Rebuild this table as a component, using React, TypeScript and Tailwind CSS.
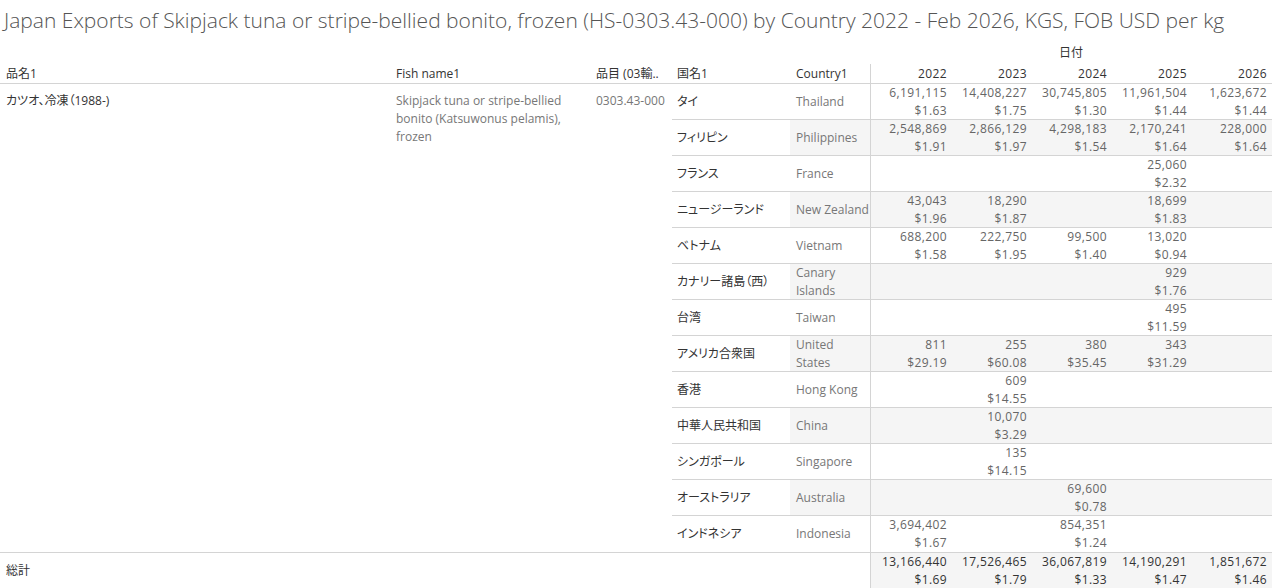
import React from 'react';

type Cell = [string, string] | null;

interface CountryRow {
    jp: string;
    en: string[];
    v: Cell[];
}

const years = ['2022', '2023', '2024', '2025', '2026'];

const rows: CountryRow[] = [
    { jp: 'タイ', en: ['Thailand'], v: [['6,191,115', '$1.63'], ['14,408,227', '$1.75'], ['30,745,805', '$1.30'], ['11,961,504', '$1.44'], ['1,623,672', '$1.44']] },
    { jp: 'フィリピン', en: ['Philippines'], v: [['2,548,869', '$1.91'], ['2,866,129', '$1.97'], ['4,298,183', '$1.54'], ['2,170,241', '$1.64'], ['228,000', '$1.64']] },
    { jp: 'フランス', en: ['France'], v: [null, null, null, ['25,060', '$2.32'], null] },
    { jp: 'ニュージーランド', en: ['New Zealand'], v: [['43,043', '$1.96'], ['18,290', '$1.87'], null, ['18,699', '$1.83'], null] },
    { jp: 'ベトナム', en: ['Vietnam'], v: [['688,200', '$1.58'], ['222,750', '$1.95'], ['99,500', '$1.40'], ['13,020', '$0.94'], null] },
    { jp: 'カナリー諸島（西）', en: ['Canary', 'Islands'], v: [null, null, null, ['929', '$1.76'], null] },
    { jp: '台湾', en: ['Taiwan'], v: [null, null, null, ['495', '$11.59'], null] },
    { jp: 'アメリカ合衆国', en: ['United', 'States'], v: [['811', '$29.19'], ['255', '$60.08'], ['380', '$35.45'], ['343', '$31.29'], null] },
    { jp: '香港', en: ['Hong Kong'], v: [null, ['609', '$14.55'], null, null, null] },
    { jp: '中華人民共和国', en: ['China'], v: [null, ['10,070', '$3.29'], null, null, null] },
    { jp: 'シンガポール', en: ['Singapore'], v: [null, ['135', '$14.15'], null, null, null] },
    { jp: 'オーストラリア', en: ['Australia'], v: [null, null, ['69,600', '$0.78'], null, null] },
    { jp: 'インドネシア', en: ['Indonesia'], v: [['3,694,402', '$1.67'], null, ['854,351', '$1.24'], null, null] },
];

const totals: [string, string][] = [
    ['13,166,440', '$1.69'],
    ['17,526,465', '$1.79'],
    ['36,067,819', '$1.33'],
    ['14,190,291', '$1.47'],
    ['1,851,672', '$1.46'],
];

// proportional kana so Japanese labels stay as compact as the original
const jpText = "[font-feature-settings:'palt']";

const ValueCell: React.FC<{ cell: Cell; dark?: boolean }> = ({ cell, dark }) => (
    <div className={`w-[80px] shrink-0 pr-[4px] text-right leading-[18px] tracking-[0.4px] ${dark ? 'text-[#333333]' : 'text-[#666666]'}`}>
        {cell && (
            <>
                <div>{cell[0]}</div>
                <div>{cell[1]}</div>
            </>
        )}
    </div>
);

export default function App() {
    return (
        <div className="w-[1272px] h-[588px] bg-white overflow-hidden text-[12px] font-['Open_Sans','Noto_Sans_CJK_JP',sans-serif]">
            {/* Title */}
            <div className="h-[42px] pl-[4px] pt-[6px] text-[21px] font-light leading-[28px] text-[#555555] whitespace-nowrap">
                Japan Exports of Skipjack tuna or stripe-bellied bonito, frozen (HS-0303.43-000) by Country 2022 - Feb 2026, KGS, FOB USD per kg
            </div>

            {/* Column group header */}
            <div className="flex h-[22px]">
                <div className="w-[870px] shrink-0" />
                <div className={`flex-1 text-center leading-[22px] text-[#333333] ${jpText}`}>日付</div>
            </div>

            {/* Column headers */}
            <div className={`flex h-[20px] border-b border-[#d4d4d4] leading-[19px] text-[#333333] ${jpText}`}>
                <div className="w-[390px] shrink-0 pl-[6px]">品名1</div>
                <div className="w-[200px] shrink-0 pl-[6px]">Fish name1</div>
                <div className="w-[82px] shrink-0 pl-[6px] whitespace-nowrap overflow-hidden">品目 (03輸..</div>
                <div className="w-[118px] shrink-0 pl-[5px]">国名1</div>
                <div className="w-[80px] shrink-0 pl-[6px]">Country1</div>
                <div className="flex border-l border-[#d4d4d4]">
                    {years.map((y) => (
                        <div key={y} className="w-[80px] shrink-0 pr-[4px] text-right tracking-[0.4px]">{y}</div>
                    ))}
                </div>
            </div>

            {/* Body */}
            <div className="flex border-b border-[#d4d4d4]">
                <div className={`w-[390px] shrink-0 pl-[6px] pt-[8px] leading-[18px] text-[#333333] ${jpText}`}>カツオ、冷凍（1988-)</div>
                <div className="w-[200px] shrink-0 pl-[6px] pt-[8px] leading-[18px] text-[#777777] whitespace-nowrap">
                    <div>Skipjack tuna or stripe-bellied</div>
                    <div>bonito (Katsuwonus pelamis),</div>
                    <div>frozen</div>
                </div>
                <div className="w-[82px] shrink-0 pl-[6px] pt-[8px] leading-[18px] text-[#777777]">0303.43-000</div>
                <div className="flex-1">
                    {rows.map((r, i) => (
                        <div
                            key={r.en.join(' ')}
                            className={`flex h-[36px] ${i < rows.length - 1 ? 'border-b border-[#d4d4d4]' : ''}`}
                        >
                            <div className={`w-[118px] shrink-0 pl-[5px] flex items-center text-[#333333] ${jpText}`}>{r.jp}</div>
                            <div className={`flex flex-1 ${i % 2 === 1 ? 'bg-[#f5f5f5]' : ''}`}>
                                <div className="w-[80px] shrink-0 pl-[6px] flex flex-col justify-center leading-[18px] text-[#777777] whitespace-nowrap">
                                    {r.en.map((t) => (
                                        <div key={t}>{t}</div>
                                    ))}
                                </div>
                                <div className="flex border-l border-[#d4d4d4]">
                                    {r.v.map((c, j) => (
                                        <ValueCell key={j} cell={c} />
                                    ))}
                                </div>
                            </div>
                        </div>
                    ))}
                </div>
            </div>

            {/* Grand total */}
            <div className="flex h-[37px] border-b border-[#d4d4d4]">
                <div className={`w-[870px] shrink-0 pl-[6px] flex items-center text-[#333333] ${jpText}`}>総計</div>
                <div className="flex flex-1 border-l border-[#d4d4d4] bg-[#f5f5f5]">
                    {totals.map((c, j) => (
                        <ValueCell key={j} cell={c} dark />
                    ))}
                </div>
            </div>
        </div>
    );
}
